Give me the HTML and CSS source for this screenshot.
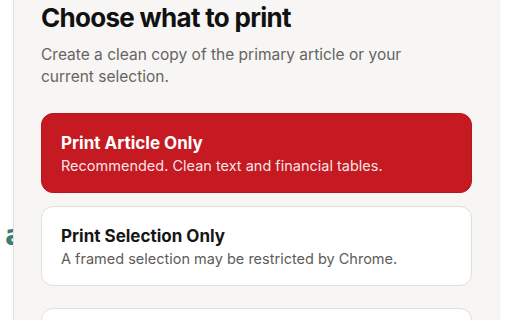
FILE: index.html
```html
<!DOCTYPE html>
<html>
<head>
<meta charset="utf-8">
<link rel="stylesheet" href="styles.css">
</head>
<body>
<div class="page">
  <div class="bg-text">a</div>
  <aside class="panel">
    <h1 class="title">Choose what to print</h1>
    <p class="lead">Create a clean copy of the primary article or your current selection.</p>
    <div class="options">
      <button class="option option-primary">
        <span class="option-title">Print Article Only</span>
        <span class="option-desc">Recommended. Clean text and financial tables.</span>
      </button>
      <button class="option">
        <span class="option-title">Print Selection Only</span>
        <span class="option-desc">A framed selection may be restricted by Chrome.</span>
      </button>
    </div>
    <div class="options options-more">
      <button class="option option-empty" aria-label="More options"></button>
    </div>
  </aside>
</div>
</body>
</html>
```
FILE: styles.css
```css
* { box-sizing: border-box; }
html, body { margin: 0; padding: 0; background: #ffffff; overflow: hidden; }
body { width: 512px; height: 320px; font-family: Inter, "Noto Sans", sans-serif; }
.page { position: relative; width: 512px; height: 320px; }
.bg-text {
  position: absolute;
  left: 5px;
  top: 219px;
  font-family: "DejaVu Sans", sans-serif;
  font-size: 28px;
  font-weight: 700;
  color: #3a7e7c;
}
.panel {
  position: absolute;
  left: 14px;
  top: -20px;
  width: 485px;
  height: 360px;
  background: #f7f6f4;
  box-shadow: -1px 0 0 #e2e0dd, 0 0 3px rgba(0,0,0,0.12);
  padding: 22px 27px 0 27px;
}
.title {
  margin: 0;
  font-size: 26px;
  line-height: 32px;
  font-weight: 700;
  letter-spacing: -0.7px;
  color: #111111;
}
.lead {
  margin: 10px 0 0 0;
  font-size: 15.5px;
  line-height: 22px;
  color: #666462;
  width: 380px;
}
.options {
  display: flex;
  flex-direction: column;
  gap: 13px;
  margin-top: 25px;
}
.options-more { margin-top: 22px; }
.option {
  display: flex;
  flex-direction: column;
  align-items: flex-start;
  width: 431px;
  height: 80px;
  padding: 18px 19px 0 19px;
  border: 1px solid #e2ded8;
  border-radius: 12px;
  background: #ffffff;
  font-family: inherit;
  text-align: left;
  color: #161616;
}
.option-primary {
  background: #c51a22;
  border-color: #b8151d;
  color: #ffffff;
}
.option-title {
  font-size: 17px;
  line-height: 22px;
  font-weight: 700;
}
.option-desc {
  margin-top: 2px;
  font-size: 14.5px;
  line-height: 20px;
  color: #5e5c5a;
}
.option-primary .option-desc { color: rgba(255,255,255,0.9); }
```
